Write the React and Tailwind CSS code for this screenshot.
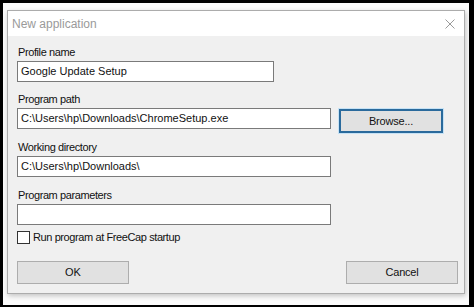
const font = { fontFamily: '"Liberation Sans", Arial, sans-serif' };

const Field = ({ label, value, width, mt }) => (
  <>
    <div className={`${mt} h-[14px] pl-[1px] text-[11px] leading-[14px] tracking-[-0.4px] text-[#111]`}>{label}</div>
    <div className={`mt-[2px] flex h-[21px] ${width} items-center border border-[#7a7a7a] bg-white pl-[3px] text-[11px] text-[#111]`}>
      {value}
    </div>
  </>
);

const App = () => {
  return (
    <div style={font} className="flex h-[307px] w-[474px] bg-black pb-[2px] pl-[3px] pr-[5px] pt-[3px]">
      <div className="flex-1 bg-[#fbfbfb] pb-[11px] pl-[4px] pr-[4px] pt-[7px]">
        <div className="flex h-[284px] w-[458px] flex-col border border-[#acacac] bg-white shadow-[1px_2px_5px_rgba(0,0,0,0.22)]">
          {/* title bar */}
          <div className="flex h-[25px] items-center justify-between bg-white pl-[4px] pr-[9px]">
            <span className="text-[12px] text-[#9a9a9a]">New application</span>
            <svg width="10" height="10" viewBox="0 0 10 10" className="text-[#9a9a9a]">
              <path d="M0.5 0.5 L9.5 9.5 M9.5 0.5 L0.5 9.5" stroke="currentColor" strokeWidth="1" fill="none" />
            </svg>
          </div>

          {/* body */}
          <div className="flex flex-1 flex-col bg-[#f0f0f0] pl-[9px] pr-[6px] pt-[9px]">
            <Field label="Profile name" value="Google Update Setup" width="w-[257px]" mt="mt-0" />

            <div className="mt-[10px] h-[14px] pl-[1px] text-[11px] leading-[14px] tracking-[-0.4px] text-[#111]">Program path</div>
            <div className="mt-[2px] flex items-start">
              <div className="flex h-[21px] w-[314px] items-center border border-[#7a7a7a] bg-white pl-[3px] text-[11px] text-[#111]">
                C:\Users\hp\Downloads\ChromeSetup.exe
              </div>
              <button className="ml-[8px] mt-[1px] flex h-[24px] w-[104px] items-center justify-center border-2 border-[#2a6a9c] bg-[#e1e1e1] text-[11px] tracking-[-0.2px] text-[#111] shadow-[0_0_0_1px_#c6e2f5]">
                Browse...
              </button>
            </div>

            <Field label="Working directory" value="C:\Users\hp\Downloads\" width="w-[314px]" mt="mt-[7px]" />
            <Field label="Program parameters" value="" width="w-[314px]" mt="mt-[11px]" />

            <div className="mt-[6px] flex h-[13px] items-center">
              <div className="h-[13px] w-[13px] border border-[#333333] bg-white" />
              <span className="ml-[3px] text-[11px] leading-[13px] tracking-[-0.4px] text-[#111]">Run program at FreeCap startup</span>
            </div>

            <div className="mt-[17px] flex justify-between">
              <button className="flex h-[23px] w-[112px] items-center justify-center border border-[#adadad] bg-[#e1e1e1] text-[11px] text-[#111]">
                OK
              </button>
              <button className="flex h-[23px] w-[112px] items-center justify-center border border-[#adadad] bg-[#e1e1e1] text-[11px] tracking-[-0.2px] text-[#111]">
                Cancel
              </button>
            </div>
          </div>
        </div>
      </div>
    </div>
  );
};

export default App;
